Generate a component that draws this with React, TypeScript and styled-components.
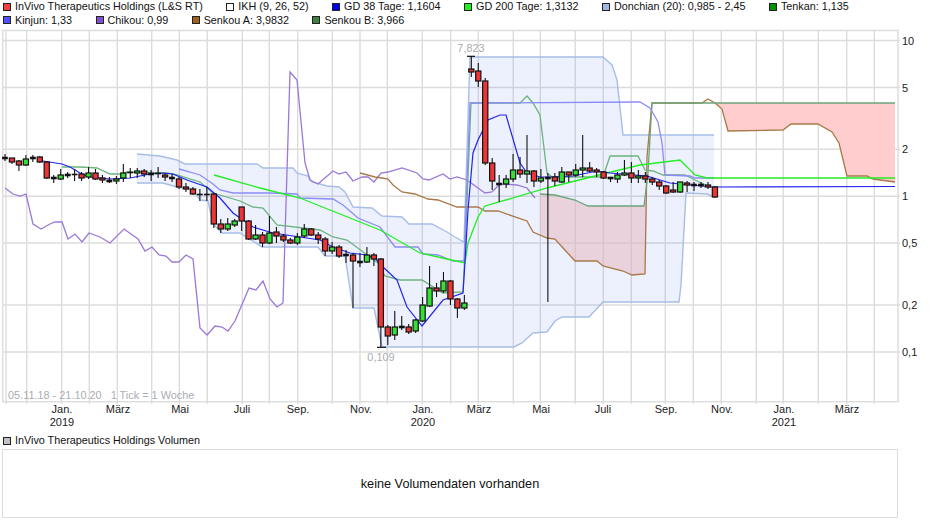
import React from 'react';
import styled, { createGlobalStyle } from 'styled-components';

const GlobalStyle = createGlobalStyle`
  html, body {
    margin: 0;
    padding: 0;
    background: #fff;
  }
  body {
    font-family: "Liberation Sans", Arial, sans-serif;
    color: #111;
  }
`;

const Page = styled.div`
  width: 940px;
  height: 526px;
  overflow: hidden;
`;

const LegendBar = styled.div`
  display: flex;
  flex-direction: column;
  height: 27px;
  padding-left: 3px;
`;

const LegendRow = styled.div`
  display: flex;
  align-items: center;
  gap: 23.5px;
  height: 13.5px;
`;

const LegendItem = styled.div`
  display: flex;
  align-items: center;
  gap: 4px;
  font-size: 10.8px;
  line-height: 13px;
  white-space: nowrap;
`;

const Swatch = styled.span<{ $color: string }>`
  display: block;
  box-sizing: border-box;
  width: 8px;
  height: 8px;
  border: 1px solid #222;
  background: ${props => props.$color};
`;

const ChartSvg = styled.svg`
  display: block;
  width: 940px;
  height: 405px;
`;

const AxisText = styled.text`
  font-family: "Liberation Sans", Arial, sans-serif;
  font-size: 11px;
  fill: #222;
`;

const PriceTag = styled.text`
  font-family: "Liberation Sans", Arial, sans-serif;
  font-size: 10.9px;
  fill: #a9adb3;
`;

const VolumeHead = styled.div`
  display: flex;
  align-items: center;
  height: 17px;
  padding-left: 3px;
`;

const VolumePanel = styled.div`
  display: flex;
  align-items: center;
  justify-content: center;
  box-sizing: border-box;
  width: 896px;
  height: 69px;
  margin-left: 2px;
  border: 1.5px solid #dcdcdc;
  font-size: 12.7px;
  color: #111;
`;

const legendRows = [
  [
    { color: '#f04040', label: 'InVivo Therapeutics Holdings (L&S RT)' },
    { color: '#ffffff', label: 'IKH (9, 26, 52)' },
    { color: '#0000f0', label: 'GD 38 Tage: 1,1604' },
    { color: '#20f020', label: 'GD 200 Tage: 1,3132' },
    { color: '#a0b6e0', label: 'Donchian (20): 0,985 - 2,45' },
    { color: '#009000', label: 'Tenkan: 1,135' },
  ],
  [
    { color: '#5050ff', label: 'Kinjun: 1,33' },
    { color: '#8050d0', label: 'Chikou: 0,99' },
    { color: '#a06020', label: 'Senkou A: 3,9832' },
    { color: '#408040', label: 'Senkou B: 3,966' },
  ],
];

const verticals = [
  26.7, 61.7, 89.3, 117.3, 151.7, 179.3, 207.3, 242.3, 269.3, 297.7, 332.3, 360, 387.3, 422.3, 450.7, 478.3,
  513.3, 540.3, 575.3, 603.3, 631.3, 665.3, 693.3, 721.3, 756.3, 783.3, 818.3, 846.7, 874.3,
];

const priceScale = [
  { label: '10', y: 40.5 },
  { label: '5', y: 87.5 },
  { label: '2', y: 149.3 },
  { label: '1', y: 196.2 },
  { label: '0,5', y: 243 },
  { label: '0,2', y: 305 },
  { label: '0,1', y: 352 },
];

const months = [
  { label: 'Jan.', x: 62, year: '2019' },
  { label: 'März', x: 118 },
  { label: 'Mai', x: 180 },
  { label: 'Juli', x: 242 },
  { label: 'Sep.', x: 298 },
  { label: 'Nov.', x: 361 },
  { label: 'Jan.', x: 423, year: '2020' },
  { label: 'März', x: 479 },
  { label: 'Mai', x: 541 },
  { label: 'Juli', x: 603 },
  { label: 'Sep.', x: 666 },
  { label: 'Nov.', x: 722 },
  { label: 'Jan.', x: 784, year: '2021' },
  { label: 'März', x: 847 },
];

type Pt = [number, number];

const donchianTop: Pt[] = [
  [137, 154], [160, 156], [177, 160], [185, 164], [257, 164], [263, 168], [293, 168], [297, 173], [308, 176],
  [312, 182], [320, 184], [327, 186], [339, 187], [345, 192], [353, 207], [372, 208], [382, 216], [402, 217],
  [409, 224], [432, 224], [447, 232], [455, 237], [464, 242], [467, 150], [470, 57], [603, 57], [612, 65],
  [617, 80], [623, 135], [714, 135],
];

const donchianBottom: Pt[] = [
  [137, 183], [163, 183], [177, 187], [193, 190], [200, 200], [208, 201], [213, 224], [222, 233], [240, 233],
  [262, 247], [318, 247], [325, 256], [345, 256], [353, 308], [374, 308], [382, 347], [514, 347], [522, 343],
  [533, 333], [547, 332], [555, 321], [562, 317], [589, 317], [603, 302], [679, 302], [681, 285], [686, 193],
  [707, 194], [714, 197],
];

const gd38: Pt[] = [
  [43, 161], [62, 164], [70, 167], [80, 173], [90, 177], [110, 179], [130, 178], [150, 174], [163, 173],
  [173, 174], [187, 180], [207, 187], [220, 198], [233, 213], [253, 227], [273, 233], [300, 237], [320, 240],
  [333, 247], [350, 253], [367, 255], [375, 258], [383, 267], [397, 280], [407, 307], [422, 326], [443, 300],
  [463, 293], [465, 262], [468, 210], [473, 153], [478, 140], [488, 120], [500, 115], [506, 115], [520, 163],
  [527, 173], [540, 177], [555, 177], [573, 176], [597, 171], [610, 173], [647, 176], [670, 183], [712, 187],
  [895, 186.5],
];

const gd200: Pt[] = [
  [214, 175], [260, 188], [300, 198], [340, 214], [380, 230], [420, 253], [447, 259], [465, 263], [468, 243],
  [478, 217], [485, 206], [547, 188], [607, 173], [640, 165], [680, 160], [695, 175], [707, 178], [895, 178],
];

const tenkan: Pt[] = [
  [62, 167], [80, 167], [97, 168], [110, 174], [120, 174], [127, 172], [167, 173], [177, 175], [200, 182],
  [213, 193], [230, 198], [240, 201], [253, 207], [263, 208], [277, 225], [320, 230], [333, 237], [347, 240],
  [378, 263], [385, 276], [400, 280], [422, 280], [443, 293], [463, 292], [465, 250], [471, 103], [520, 103],
  [527, 96], [533, 103], [540, 115], [547, 173], [552, 177], [603, 177], [610, 156], [638, 156], [645, 170],
  [653, 171], [663, 175], [685, 175], [695, 180], [710, 187],
];

const kinjun: Pt[] = [
  [179, 169], [190, 172], [200, 175], [213, 184], [220, 190], [233, 193], [270, 193], [297, 194], [300, 198],
  [333, 199], [343, 205], [358, 218], [380, 227], [395, 247], [418, 247], [423, 254], [438, 255], [453, 261],
  [464, 261], [470, 103], [640, 102], [650, 108], [658, 122], [662, 143], [665, 175], [690, 176], [695, 178],
  [714, 178],
];

const chikou: Pt[] = [
  [5, 188], [13, 194], [20, 196], [26, 194], [33, 224], [41, 229], [50, 224], [55, 222], [62, 222], [68, 239],
  [75, 234], [82, 242], [89, 233], [100, 237], [110, 243], [124, 229], [138, 239], [145, 251], [152, 247],
  [159, 255], [166, 256], [172, 262], [179, 262], [186, 255], [193, 259], [200, 328], [207, 335], [215, 326],
  [222, 327], [228, 331], [235, 321], [249, 288], [256, 290], [263, 281], [270, 299], [277, 307], [283, 303],
  [290, 72], [297, 80], [305, 163], [310, 180], [318, 184], [333, 171], [339, 174], [346, 172], [353, 181],
  [362, 177], [368, 177], [374, 182], [381, 173], [388, 172], [402, 168], [417, 173], [423, 179], [429, 180],
  [443, 174], [450, 179], [457, 177], [467, 180], [485, 193], [492, 192], [500, 184], [517, 185], [527, 188],
  [535, 198],
];

const senkouA: Pt[] = [
  [360, 173], [375, 177], [382, 178], [388, 179], [393, 185], [402, 192], [415, 194], [428, 199], [438, 200],
  [457, 207], [478, 207], [485, 211], [498, 211], [527, 221], [533, 232], [547, 238], [555, 239], [563, 248],
  [575, 261], [597, 261], [603, 266], [623, 271], [632, 275], [645, 274], [647, 157], [652, 103], [702, 103],
  [708, 99], [715, 103], [722, 109], [728, 131], [783, 130], [791, 124], [818, 124], [832, 132], [839, 143],
  [847, 176], [867, 176], [873, 179], [895, 182],
];

const senkouB: Pt[] = [
  [540, 194], [555, 195], [575, 200], [588, 206], [644, 206], [648, 173], [652, 103], [895, 103],
];

const cloudLower: Pt[] = [
  [540, 194], [555, 195], [575, 200], [588, 206], [644, 206], [647, 190], [645, 274], [632, 275], [623, 271],
  [603, 266], [597, 261], [575, 261], [563, 248], [555, 239], [547, 238], [540, 235],
];

const cloudUpper: Pt[] = [
  [715, 103], [895, 103], [895, 182], [873, 179], [867, 176], [847, 176], [839, 143], [832, 132], [818, 124],
  [791, 124], [783, 130], [728, 131], [722, 109],
];

// [wick top, wick bottom, body top, body bottom, r = fällt, g = steigt, d = doji]
const candles: [number, number, number, number, string][] = [
  [154, 161, 157, 159, 'd'], [158, 164, 158, 162, 'r'], [160, 171, 161, 165, 'r'], [155, 166, 159, 165, 'g'],
  [155, 162, 157, 159, 'd'], [156, 163, 157, 162, 'r'], [161, 179, 162, 178, 'r'], [175, 183, 177, 179, 'd'],
  [169, 180, 175, 179, 'g'], [172, 178, 174, 176, 'd'], [169, 181, 174, 175, 'd'], [172, 181, 174, 178, 'r'],
  [167, 179, 173, 177, 'g'], [169, 180, 173, 179, 'r'], [175, 183, 178, 180, 'r'], [177, 183, 180, 182, 'd'],
  [176, 184, 179, 181, 'g'], [164, 182, 173, 178, 'g'], [168, 178, 172, 173, 'd'], [168, 178, 171, 173, 'g'],
  [169, 177, 171, 174, 'r'], [170, 181, 173, 175, 'd'], [167, 178, 173, 174, 'd'], [173, 181, 175, 177, 'r'],
  [174, 182, 177, 179, 'd'], [177, 189, 179, 187, 'r'], [183, 192, 187, 189, 'r'], [187, 195, 189, 194, 'r'],
  [189, 201, 194, 195, 'd'], [187, 201, 194, 195, 'd'], [193, 228, 194, 224, 'r'], [219, 233, 224, 229, 'r'],
  [218, 231, 224, 229, 'g'], [219, 227, 221, 225, 'g'], [207, 231, 207, 221, 'r'], [220, 240, 221, 239, 'r'],
  [225, 240, 235, 239, 'g'], [232, 247, 235, 243, 'r'], [216, 244, 233, 243, 'g'], [227, 243, 232, 236, 'r'],
  [234, 242, 236, 240, 'r'], [238, 244, 240, 243, 'r'], [233, 245, 237, 243, 'g'], [224, 238, 229, 236, 'g'],
  [228, 236, 229, 235, 'r'], [232, 244, 235, 239, 'r'], [237, 256, 239, 251, 'r'], [242, 254, 247, 251, 'g'],
  [245, 258, 247, 256, 'r'], [250, 263, 254, 256, 'd'], [253, 308, 255, 261, 'r'], [253, 267, 261, 263, 'd'],
  [247, 263, 255, 262, 'g'], [253, 266, 255, 259, 'r'], [258, 347, 259, 327, 'r'], [325, 345, 327, 336, 'r'],
  [311, 340, 327, 335, 'g'], [316, 330, 326, 328, 'd'], [324, 334, 327, 332, 'r'], [319, 333, 320, 331, 'g'],
  [297, 322, 305, 321, 'g'], [266, 307, 288, 306, 'g'], [283, 297, 288, 291, 'r'], [272, 293, 281, 291, 'g'],
  [280, 305, 281, 299, 'r'], [298, 318, 299, 308, 'r'], [295, 310, 303, 308, 'g'], [56, 77, 69, 72, 'r'],
  [63, 87, 71, 81, 'r'], [78, 165, 81, 163, 'r'], [158, 190, 163, 181, 'r'], [175, 202, 183, 185, 'd'],
  [175, 188, 179, 184, 'g'], [154, 182, 170, 179, 'g'], [157, 178, 170, 174, 'r'], [135, 183, 171, 174, 'g'],
  [170, 187, 171, 181, 'r'], [169, 183, 178, 181, 'g'], [173, 302, 177, 179, 'd'], [173, 186, 177, 181, 'r'],
  [167, 183, 172, 182, 'g'], [172, 182, 172, 175, 'r'], [164, 177, 170, 175, 'g'], [135, 177, 168, 170, 'g'],
  [162, 172, 168, 171, 'r'], [168, 177, 170, 172, 'r'], [171, 179, 172, 178, 'r'], [177, 182, 177, 179, 'd'],
  [172, 183, 175, 179, 'g'], [160, 176, 173, 175, 'g'], [162, 183, 173, 178, 'r'], [170, 183, 176, 178, 'g'],
  [172, 183, 176, 179, 'r'], [177, 185, 179, 182, 'r'], [180, 190, 182, 186, 'r'], [185, 194, 186, 193, 'r'],
  [182, 193, 190, 192, 'r'], [182, 193, 182, 192, 'g'], [181, 192, 183, 185, 'r'], [182, 191, 184, 186, 'd'],
  [182, 188, 184, 186, 'd'], [182, 189, 185, 187, 'r'], [186, 198, 187, 197, 'r'],
];

const toPoints = (pts: Pt[]) => pts.map(p => p.join(',')).join(' ');

const lines: { pts: Pt[]; color: string; width: number }[] = [
  { pts: donchianTop, color: '#a8bee6', width: 1.4 },
  { pts: donchianBottom, color: '#a8bee6', width: 1.4 },
  { pts: chikou, color: '#9a78d8', width: 1.3 },
  { pts: senkouA, color: '#a87848', width: 1.3 },
  { pts: senkouB, color: '#6ea47a', width: 1.3 },
  { pts: tenkan, color: '#6cb47c', width: 1.3 },
  { pts: kinjun, color: '#8c8cf6', width: 1.3 },
  { pts: gd200, color: '#22ee22', width: 1.3 },
  { pts: gd38, color: '#2222f0', width: 1.2 },
];

const Candle: React.FC<{ index: number; data: [number, number, number, number, string] }> = ({ index, data }) => {
  const [wickTop, wickBottom, bodyTop, bodyBottom, kind] = data;
  const x = 5 + index * 6.96;
  const fill = kind === 'r' ? '#ee3535' : kind === 'g' ? '#33e033' : '#111';
  return (
    <g>
      <line x1={x} x2={x} y1={wickTop} y2={wickBottom} stroke="#111" strokeWidth={1.1} />
      <rect
        x={x - 2.6}
        y={bodyTop}
        width={5.2}
        height={Math.max(bodyBottom - bodyTop, 0.6)}
        fill={fill}
        stroke="#111"
        strokeWidth={kind === 'd' ? 0.6 : 1.2}
      />
    </g>
  );
};

const PriceChart: React.FC = () => (
  <ChartSvg viewBox="0 27 940 405">
    <g stroke="#dcdcdc" strokeWidth={1.4} fill="none">
      <rect x={2.7} y={30.5} width={895.3} height={371.2} />
      <line x1={6} x2={6} y1={30.5} y2={404} />
      {verticals.map(x => (
        <line key={x} x1={x} x2={x} y1={30.5} y2={404} />
      ))}
      {priceScale.map(p => (
        <line key={p.label} x1={2.7} x2={900} y1={p.y} y2={p.y} />
      ))}
    </g>

    <polygon points={toPoints([...donchianTop, ...[...donchianBottom].reverse()])} fill="rgba(74,127,232,0.105)" />
    <polygon points={toPoints(cloudUpper)} fill="#ffcdcd" />
    <polygon points={toPoints(cloudLower)} fill="rgba(231,184,192,0.55)" />

    {lines.map((l, i) => (
      <polyline key={i} points={toPoints(l.pts)} fill="none" stroke={l.color} strokeWidth={l.width} />
    ))}

    <line x1={377} x2={386} y1={347.3} y2={347.3} stroke="#111" strokeWidth={1.2} />
    <line x1={467} x2={475} y1={56.3} y2={56.3} stroke="#111" strokeWidth={1.2} />
    {candles.map((c, i) => (
      <Candle key={i} index={i} data={c} />
    ))}

    <PriceTag x={471} y={52} textAnchor="middle">7,823</PriceTag>
    <PriceTag x={381} y={361} textAnchor="middle">0,109</PriceTag>
    <PriceTag x={8} y={399} xmlSpace="preserve">05.11.18 - 21.10.20   1 Tick = 1 Woche</PriceTag>

    {priceScale.map(p => (
      <AxisText key={p.label} x={902} y={p.y + 4}>{p.label}</AxisText>
    ))}
    {months.map(m => (
      <g key={m.x}>
        <AxisText x={m.x} y={413} textAnchor="middle">{m.label}</AxisText>
        {m.year && <AxisText x={m.x} y={426} textAnchor="middle">{m.year}</AxisText>}
      </g>
    ))}
  </ChartSvg>
);

export default function App() {
  return (
    <Page>
      <GlobalStyle />
      <LegendBar>
        {legendRows.map((row, r) => (
          <LegendRow key={r}>
            {row.map(item => (
              <LegendItem key={item.label}>
                <Swatch $color={item.color} />
                {item.label}
              </LegendItem>
            ))}
          </LegendRow>
        ))}
      </LegendBar>
      <PriceChart />
      <VolumeHead>
        <LegendItem>
          <Swatch $color="#c0c0c0" />
          InVivo Therapeutics Holdings Volumen
        </LegendItem>
      </VolumeHead>
      <VolumePanel>keine Volumendaten vorhanden</VolumePanel>
    </Page>
  );
}
